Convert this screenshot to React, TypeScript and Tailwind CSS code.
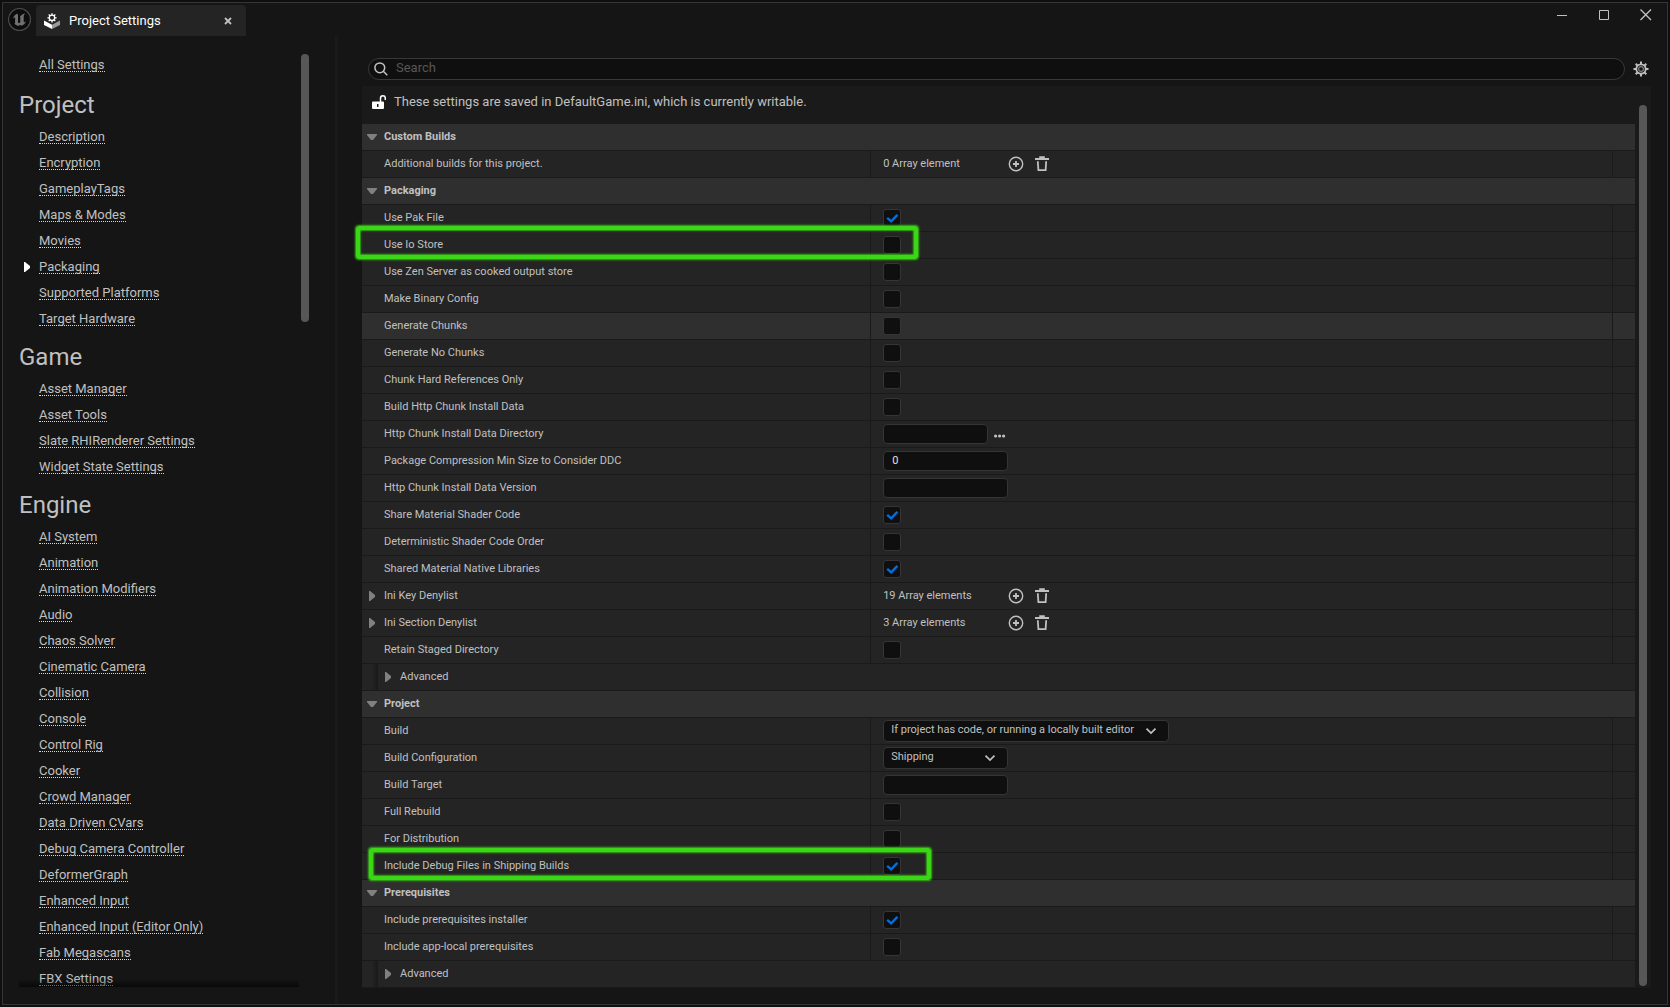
import React, { useState } from 'react'

const sections = [
  {
    title: 'Project',
    links: ['Description', 'Encryption', 'GameplayTags', 'Maps & Modes', 'Movies', 'Packaging', 'Supported Platforms', 'Target Hardware'],
  },
  {
    title: 'Game',
    links: ['Asset Manager', 'Asset Tools', 'Slate RHIRenderer Settings', 'Widget State Settings'],
  },
  {
    title: 'Engine',
    links: [
      'AI System', 'Animation', 'Animation Modifiers', 'Audio', 'Chaos Solver', 'Cinematic Camera',
      'Collision', 'Console', 'Control Rig', 'Cooker', 'Crowd Manager', 'Data Driven CVars',
      'Debug Camera Controller', 'DeformerGraph', 'Enhanced Input', 'Enhanced Input (Editor Only)',
      'Fab Megascans', 'FBX Settings',
    ],
  },
]

const rows: any[] = [
  { type: 'header', label: 'Custom Builds' },
  { type: 'array', label: 'Additional builds for this project.', value: '0 Array element' },
  { type: 'header', label: 'Packaging' },
  { type: 'check', label: 'Use Pak File', value: true },
  { type: 'check', label: 'Use Io Store', mark: '-left-[6px] -top-[6px] h-[33px]' },
  { type: 'check', label: 'Use Zen Server as cooked output store' },
  { type: 'check', label: 'Make Binary Config' },
  { type: 'check', label: 'Generate Chunks', active: true },
  { type: 'check', label: 'Generate No Chunks' },
  { type: 'check', label: 'Chunk Hard References Only' },
  { type: 'check', label: 'Build Http Chunk Install Data' },
  { type: 'path', label: 'Http Chunk Install Data Directory', value: '' },
  { type: 'text', label: 'Package Compression Min Size to Consider DDC', value: '0' },
  { type: 'text', label: 'Http Chunk Install Data Version', value: '' },
  { type: 'check', label: 'Share Material Shader Code', value: true },
  { type: 'check', label: 'Deterministic Shader Code Order' },
  { type: 'check', label: 'Shared Material Native Libraries', value: true },
  { type: 'array', label: 'Ini Key Denylist', value: '19 Array elements', expandable: true },
  { type: 'array', label: 'Ini Section Denylist', value: '3 Array elements', expandable: true },
  { type: 'check', label: 'Retain Staged Directory' },
  { type: 'advanced', label: 'Advanced' },
  { type: 'header', label: 'Project' },
  { type: 'select', label: 'Build', value: 'If project has code, or running a locally built editor', width: 'w-[286px]' },
  { type: 'select', label: 'Build Configuration', value: 'Shipping', width: 'w-[125px]' },
  { type: 'text', label: 'Build Target', value: '' },
  { type: 'check', label: 'Full Rebuild' },
  { type: 'check', label: 'For Distribution' },
  { type: 'check', label: 'Include Debug Files in Shipping Builds', value: true, mark: 'left-[7px] -top-[5px] h-[32px]' },
  { type: 'header', label: 'Prerequisites' },
  { type: 'check', label: 'Include prerequisites installer', value: true },
  { type: 'check', label: 'Include app-local prerequisites' },
  { type: 'advanced', label: 'Advanced' },
]

function DownArrow() {
  return (
    <svg width="10" height="6" viewBox="0 0 10 6" fill="#808080">
      <path d="M0 0h10v1L6 6H4L0 1z" />
    </svg>
  )
}

function RightArrow({ fill = '#808080' }: any) {
  return (
    <svg width="6" height="10" viewBox="0 0 6 10" fill={fill}>
      <path d="M0 0h1l5 4v2l-5 4H0z" />
    </svg>
  )
}

function GearIcon() {
  return (
    <svg width="16" height="16" viewBox="0 0 16 16" fill="none" stroke="#c0c0c0">
      <circle cx="8" cy="8" r="4.7" strokeWidth="1.8" />
      <circle cx="8" cy="8" r="2.4" strokeWidth="1.2" stroke="#808080" />
      <path
        strokeWidth="2"
        d="M8 .5v2.7M8 12.8v2.7M.5 8h2.7M12.8 8h2.7M2.7 2.7l1.9 1.9M11.4 11.4l1.9 1.9M13.3 2.7l-1.9 1.9M4.6 11.4l-1.9 1.9"
      />
    </svg>
  )
}

function UnrealLogo() {
  return (
    <svg width="24" height="24" viewBox="0 0 24 24">
      <circle cx="11.5" cy="11.5" r="11" fill="#0c0c0c" stroke="#4a4a4a" strokeWidth="1.2" />
      <path
        fill="#707070"
        d="M10.9 5.1C8.2 5.900 5.400 8 4.700 10.900c.9-1.200 1.700-1.600 2.100-1.400.3.1.3.4.3.8v4.400c0 .7-.3.9-.9.8.9 1.200 2.500 2.200 4.400 2.400l1.300-1.200 1.500 1.100c2.400-.8 4.100-2.600 4.700-4.800-.8.9-1.400 1.300-1.900 1.300-.4 0-.5-.3-.5-.8V8.500c0-1.100.6-2 1.500-2.900-1.800.3-3.300 1.100-4.400 2.400-.3-.3-.7-.5-1.300-.5.6.4.8.8.8 1.400v5.400c-.5.6-1 .8-1.400.8-.6 0-.9-.4-.9-1V7.200c0-.8-.3-1-.7-1 0-.3.5-.7 1.600-1.100z"
      />
    </svg>
  )
}

function TabIcon() {
  return (
    <svg width="16" height="16" viewBox="0 0 16 16">
      <path fill="#fff" d="M0 7.500l8 4.200V16l-8-4z" />
      <path fill="#9a9a9a" d="M16 7.500l-8 4.200V16l8-4z" />
      <circle cx="8" cy="4.800" r="2.700" fill="none" stroke="#fff" strokeWidth="1.300" />
      <path
        stroke="#fff"
        strokeWidth="1.300"
        d="M8 .2v1.900M8 7.500v1.900M3.400 4.800h1.900M10.700 4.800h1.900M4.700 1.500l1.300 1.300M10 6.800l1.300 1.300M11.300 1.500L10 2.800M6 6.800L4.700 8.100"
      />
    </svg>
  )
}

function Checkbox({ id, value }: any) {
  const [checked, setChecked] = useState(!!value)
  return (
    <span className="relative flex">
      <input
        id={id}
        type="checkbox"
        checked={checked}
        onChange={() => setChecked(!checked)}
        className="size-[18px] appearance-none rounded-[3px] border border-[#353535] bg-[#0f0f0f]"
      />
      {checked &&
        <svg className="pointer-events-none absolute inset-0" width="18" height="18" viewBox="0 0 18 18" fill="none" stroke="#0070e0" strokeWidth="2.4">
          <path d="M4.200 8.800l4 3.500 6.200-6.400" />
        </svg>
      }
    </span>
  )
}

function TextBox({ id, value, width }: any) {
  return (
    <input
      id={id}
      type="text"
      defaultValue={value}
      className={`${width} h-5 rounded-[4px] border border-[#353535] bg-[#0f0f0f] px-2 pb-0.5 text-[11px] text-[#e0e0e0] outline-none`}
    />
  )
}

function Value({ item, id }: any) {
  if (item.type == 'check') return <Checkbox id={id} value={item.value} />
  if (item.type == 'text') return <TextBox id={id} value={item.value} width="w-[125px]" />
  if (item.type == 'path') {
    return (
      <>
        <TextBox id={id} value={item.value} width="w-[105px]" />
        <button aria-label="Browse" className="ml-1.5 mt-1">
          <svg width="12" height="4" viewBox="0 0 12 4" fill="#c0c0c0">
            <circle cx="1.6" cy="2" r="1.6" />
            <circle cx="5.6" cy="2" r="1.6" />
            <circle cx="9.6" cy="2" r="1.6" />
          </svg>
        </button>
      </>
    )
  }
  if (item.type == 'select') {
    return (
      <span className="relative flex">
        <select id={id} className={`${item.width} h-[22px] appearance-none rounded-[4px] border border-[#353535] bg-[#0f0f0f] pb-0.5 pl-[7px] text-[11px] text-[#c0c0c0]`}>
          <option>{item.value}</option>
        </select>
        <svg className="pointer-events-none absolute right-3 top-[7px]" width="12" height="8" viewBox="0 0 12 8" fill="none" stroke="#c0c0c0" strokeWidth="1.7">
          <path d="M1.5 1.700L6 6.100l4.500-4.400" />
        </svg>
      </span>
    )
  }
  return (
    <>
      <span className="w-[125px]">{item.value}</span>
      <button aria-label="Add element">
        <svg width="16" height="16" viewBox="0 0 16 16" fill="none" stroke="#c0c0c0" strokeWidth="1.4">
          <circle cx="8" cy="8" r="6.7" />
          <path strokeWidth="1.8" d="M8 5v6M5 8h6" />
        </svg>
      </button>
      <button aria-label="Remove all elements" className="ml-2.5">
        <svg width="16" height="16" viewBox="0 0 16 16" fill="none" stroke="#c0c0c0">
          <path strokeWidth="1.8" d="M1 3h14M5.200 1.200h5.600" />
          <path strokeWidth="1.8" d="M3.800 5.200l.6 9h7.200l.6-9" />
        </svg>
      </button>
    </>
  )
}

function Row({ item, id }: any) {
  if (item.type == 'header') {
    return (
      <div className="h-[27px] border-b border-[#1a1a1a] bg-[#2f2f2f]">
        <button className="flex h-full w-full items-center pl-[5px] text-left font-bold">
          <DownArrow />
          <h3 className="pl-[7px]">{item.label}</h3>
        </button>
      </div>
    )
  }
  if (item.type == 'advanced') {
    return (
      <div className="flex h-[27px] border-b border-[#1a1a1a] bg-[#242424]">
        <div className="w-4 bg-linear-to-r from-[#242424] from-60% to-[#191919]" />
        <button className="flex items-center pl-[7px]">
          <RightArrow />
          <span className="pl-[9px]">{item.label}</span>
        </button>
      </div>
    )
  }
  return (
    <div className={`relative flex h-[27px] border-b border-[#1a1a1a] ${item.active ? 'bg-[#2f2f2f]' : 'bg-[#242424]'}`}>
      <div className="flex w-2/5 items-center border-r border-[#1a1a1a]">
        <span className="flex w-[22px] pl-[7px]">{item.expandable && <RightArrow />}</span>
        {item.type == 'array' ? <span>{item.label}</span> : <label htmlFor={id}>{item.label}</label>}
      </div>
      <div className="flex flex-1 items-center border-r border-[#1a1a1a] pl-3">
        <Value item={item} id={id} />
      </div>
      <div className="w-[22px]" />
      {item.mark &&
        <div className={`${item.mark} pointer-events-none absolute z-10 w-[562px] rounded-[3px] border-4 border-[#3bd616] shadow-[0_0_2px_1px_#33b814,inset_0_0_2px_1px_#33b814]`} />
      }
    </div>
  )
}

export default function App() {
  return (
    <div className="h-screen bg-[#0f0f0f] p-0.5 font-[Roboto,sans-serif] text-[#c0c0c0]">
      <div className="flex h-full flex-col border border-[#353535] bg-[#151515]">
        <header className="flex h-[33px] shrink-0">
          <div className="flex w-[33px] items-center justify-center">
            <UnrealLogo />
          </div>
          <div className="mt-0.5 flex w-[210px] items-center rounded-t-[4px] bg-[#242424] pl-2 pr-3 text-[13px] text-white">
            <TabIcon />
            <h1 className="flex-1 pl-[9px]">Project Settings</h1>
            <button aria-label="Close tab">
              <svg width="12" height="12" viewBox="0 0 12 12" stroke="#c0c0c0" strokeWidth="1.8">
                <path d="M3 3l6 6M9 3l-6 6" />
              </svg>
            </button>
          </div>
          <div className="ml-auto flex items-start gap-[26px] pr-[13px] pt-1">
            <button aria-label="Minimize">
              <svg width="16" height="16" viewBox="0 0 16 16" stroke="#c0c0c0">
                <path d="M3 8.500h10" />
              </svg>
            </button>
            <button aria-label="Maximize">
              <svg width="16" height="16" viewBox="0 0 16 16" fill="none" stroke="#c0c0c0">
                <path d="M3.500 3.500h9v9h-9z" />
              </svg>
            </button>
            <button aria-label="Close">
              <svg width="16" height="16" viewBox="0 0 16 16" stroke="#c0c0c0" strokeWidth="1.4">
                <path d="M2.500 2.500l10.500 10.500M13 2.500l-10.500 10.500" />
              </svg>
            </button>
          </div>
        </header>

        <div className="flex min-h-0 flex-1">
          <nav className="relative mb-[17px] flex w-[332px] shrink-0 overflow-hidden pl-4 pt-[15px] text-[13px]">
            <div className="flex-1">
              <div className="mb-0.5 h-[26px] pl-5 pt-2 leading-3">
                <a href="#" className="inline-block border-b border-dotted border-[#d8d8d8]">All Settings</a>
              </div>
              {sections.map((section, i) => (
                <div key={i}>
                  <h2 className="h-[44px] pt-2 text-2xl leading-9">{section.title}</h2>
                  <ul>
                    {section.links.map((link) => (
                      <li key={link} className="flex h-[26px] items-start pt-2 leading-3">
                        <span className="w-5 pl-[5px] pt-px">{link == 'Packaging' && <RightArrow fill="#fff" />}</span>
                        <a href="#" className="border-b border-dotted border-[#d8d8d8]">{link}</a>
                      </li>
                    ))}
                  </ul>
                </div>
              ))}
            </div>
            <div className="mr-[26px] mt-[3px] h-[268px] w-2 rounded-full bg-[#575757]" />
            <div className="absolute bottom-0 left-4 right-9 h-2 bg-linear-to-b from-transparent to-black/60" />
          </nav>
          <div className="w-[3px] bg-[#1a1a1a]" />

          <main className="flex min-w-0 flex-1 flex-col pb-4 pl-6 pr-4 pt-[22px]">
            <div className="flex items-center gap-2 pb-1.5 pl-1.5 pr-0.5">
              <div className="flex h-[22px] flex-1 items-center rounded-full border border-[#383838] bg-[#0f0f0f] pl-[5px]">
                <svg width="14" height="14" viewBox="0 0 14 14" fill="none" stroke="#c0c0c0" strokeWidth="1.5">
                  <circle cx="5.800" cy="5.800" r="4.900" />
                  <path d="M9.300 9.300l4 4" />
                </svg>
                <input
                  type="text"
                  aria-label="Search"
                  placeholder="Search"
                  className="flex-1 bg-transparent pb-0.5 pl-2 text-[13px] outline-none placeholder:text-[#575757]"
                />
              </div>
              <button aria-label="Settings">
                <GearIcon />
              </button>
            </div>

            <div className="flex min-h-0 flex-1 bg-[#1a1a1a]">
              <div className="min-w-0 flex-1 text-[11px]">
                <div className="flex h-[38px] items-center pb-1.5 pl-2.5 text-[13px]">
                  <svg width="14" height="14" viewBox="0 0 14 14">
                    <path fill="#fff" fillRule="evenodd" d="M1 6.500h10a1 1 0 0 1 1 1V13a1 1 0 0 1-1 1H1a1 1 0 0 1-1-1V7.500a1 1 0 0 1 1-1zM5 9v3h1.500V9z" />
                    <path fill="none" stroke="#fff" strokeWidth="1.500" d="M8.500 7V3.200a2.400 2.400 0 0 1 4.800 0V5" />
                  </svg>
                  <p className="pl-2">These settings are saved in DefaultGame.ini, which is currently writable.</p>
                </div>
                {rows.map((item, i) => <Row key={i} item={item} id={`prop-${i}`} />)}
              </div>
              <div className="w-4 shrink-0 px-1 pb-0.5 pt-[19px]">
                <div className="h-full rounded-full bg-[#575757]" />
              </div>
            </div>
          </main>
        </div>
      </div>
    </div>
  )
}
